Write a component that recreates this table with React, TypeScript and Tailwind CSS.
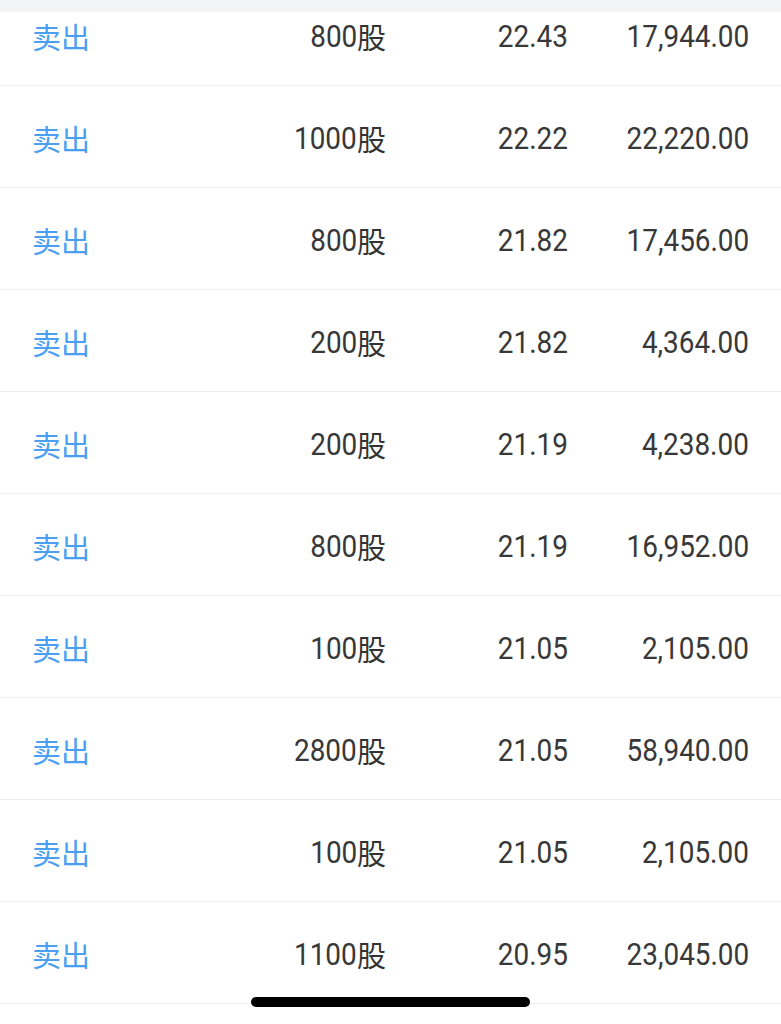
const rows = [
  { qty: '800', price: '22.43', amount: '17,944.00' },
  { qty: '1000', price: '22.22', amount: '22,220.00' },
  { qty: '800', price: '21.82', amount: '17,456.00' },
  { qty: '200', price: '21.82', amount: '4,364.00' },
  { qty: '200', price: '21.19', amount: '4,238.00' },
  { qty: '800', price: '21.19', amount: '16,952.00' },
  { qty: '100', price: '21.05', amount: '2,105.00' },
  { qty: '2800', price: '21.05', amount: '58,940.00' },
  { qty: '100', price: '21.05', amount: '2,105.00' },
  { qty: '1100', price: '20.95', amount: '23,045.00' },
]

// condensed DIN-like digits: Roboto squeezed horizontally
function Num({ children }: { children: string }) {
  return (
    <span className="inline-block origin-right scale-x-[0.9] font-['Roboto',sans-serif] text-[31px] text-[#383838]">
      {children}
    </span>
  )
}

export default function App() {
  return (
    <div className="relative flex flex-col h-[1024px] w-full overflow-hidden bg-white">
      <div className="h-[12px] bg-[#f2f3f5] shrink-0" />
      <div className="flex-1 overflow-hidden">
        <div className="-mt-[28px]">
          {rows.map((r, i) => (
            <div
              key={i}
              className="flex items-center h-[102px] pt-[3px] pl-[32px] pr-[32px] border-b border-[#ededed] leading-none"
            >
              <div className="flex-1 text-[29px] text-[#4a9ff3] font-['Noto_Sans_CJK_SC',sans-serif]">
                卖出
              </div>
              <div className="flex items-center justify-end">
                <Num>{r.qty}</Num>
                <span className="font-['Noto_Sans_CJK_SC',sans-serif] text-[29px] text-[#333333]">股</span>
              </div>
              <div className="w-[182px] text-right">
                <Num>{r.price}</Num>
              </div>
              <div className="w-[181px] text-right">
                <Num>{r.amount}</Num>
              </div>
            </div>
          ))}
        </div>
      </div>
      <div className="absolute left-[251px] top-[997px] w-[279px] h-[10px] rounded-full bg-black" />
    </div>
  )
}
